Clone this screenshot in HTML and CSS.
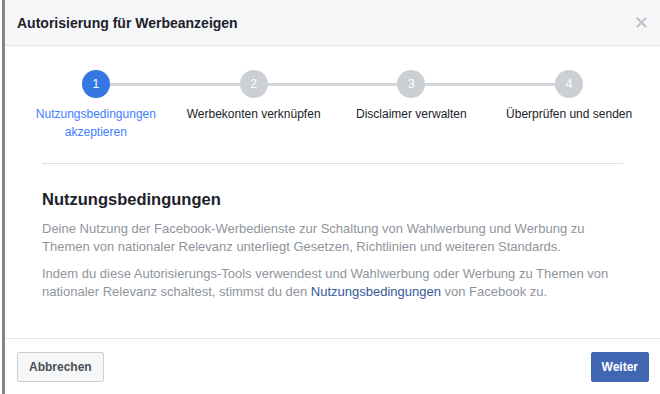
FILE: index.html
```html
<!DOCTYPE html>
<html>
<head>
    <title>Autorisierung für Werbeanzeigen</title>
    <link rel="stylesheet" href="styles.css">
</head>
<body>
    <div class="edge"></div>
    <div class="dialog">
        <header class="dialog-head">
            <h1>Autorisierung für Werbeanzeigen</h1>
            <button class="close-btn" aria-label="Schließen">
                <svg width="11" height="11" viewBox="0 0 11 11">
                    <path d="M1.5 1.5 L9.5 9.5 M9.5 1.5 L1.5 9.5" stroke="#bec2c9" stroke-width="2.2" stroke-linecap="round"/>
                </svg>
            </button>
        </header>

        <div class="dialog-body">
            <ol class="steps">
                <li class="step active">
                    <span class="dot">1</span>
                    <span class="label">Nutzungsbedingungen akzeptieren</span>
                </li>
                <li class="step">
                    <span class="dot">2</span>
                    <span class="label">Werbekonten verknüpfen</span>
                </li>
                <li class="step">
                    <span class="dot">3</span>
                    <span class="label">Disclaimer verwalten</span>
                </li>
                <li class="step">
                    <span class="dot">4</span>
                    <span class="label">Überprüfen und senden</span>
                </li>
            </ol>

            <div class="content">
                <h2>Nutzungsbedingungen</h2>
                <p>Deine Nutzung der Facebook-Werbedienste zur Schaltung von Wahlwerbung und Werbung zu Themen von nationaler Relevanz unterliegt Gesetzen, Richtlinien und weiteren Standards.</p>
                <p>Indem du diese Autorisierungs-Tools verwendest und Wahlwerbung oder Werbung zu Themen von nationaler Relevanz schaltest, stimmst du den <span class="link">Nutzungsbedingungen</span> von Facebook zu.</p>
            </div>
        </div>

        <footer class="dialog-foot">
            <button class="btn">Abbrechen</button>
            <button class="btn primary">Weiter</button>
        </footer>
    </div>
</body>
</html>
```

FILE: styles.css
```css
body {
    margin: 0;
    height: 394px;
    display: flex;
    background: #fff;
    font-family: "Liberation Sans", Arial, sans-serif;
    color: #1d2129;
    overflow: hidden;
}

.edge {
    width: 3px;
    margin-left: 2px;
    background: #858585;
}

.dialog {
    flex: 1;
    display: flex;
    flex-direction: column;
}

.dialog-head {
    height: 45px;
    display: flex;
    align-items: center;
    justify-content: space-between;
    padding: 0 13px 0 12px;
    background: #f6f7f9;
    border-bottom: 1px solid #e5e5e5;
}

.dialog-head h1 {
    margin: 0;
    font-size: 14px;
    font-weight: bold;
    color: #1d2129;
}

.close-btn {
    border: none;
    background: none;
    padding: 0;
    width: 11px;
    height: 11px;
    display: flex;
    cursor: pointer;
}

.dialog-body {
    flex: 1;
    padding: 24px 12px 0;
}

/* stepper */
.steps {
    list-style: none;
    margin: 0;
    padding: 0;
    display: grid;
    grid-template-columns: repeat(4, 1fr);
}

.step {
    position: relative;
    display: flex;
    flex-direction: column;
    align-items: center;
    text-align: center;
}

.step + .step::before {
    content: "";
    position: absolute;
    top: 13px;
    left: -50%;
    right: 50%;
    height: 3px;
    background: #d3d5d9;
}

.dot {
    position: relative;
    z-index: 1;
    width: 28px;
    height: 28px;
    border-radius: 50%;
    background: #ccd0d5;
    color: #fff;
    font-size: 12px;
    line-height: 28px;
}

.label {
    margin-top: 7px;
    font-size: 12px;
    line-height: 18px;
    color: #1d2129;
}

.step:first-child .label {
    width: 130px;
}

.step.active .dot {
    background: #3578e5;
}

.step.active .label {
    color: #4080ff;
}

/* text */
.content {
    margin: 22px 25px 0;
    padding-top: 24px;
    border-top: 1px solid #dddfe2;
}

.content h2 {
    margin: 0 0 10px;
    font-size: 16.5px;
    line-height: 22px;
    font-weight: bold;
    color: #1d2129;
}

.content p {
    margin: 0 0 9px;
    font-size: 13px;
    line-height: 18px;
    color: #90949c;
}

.content .link {
    color: #365899;
}

/* footer */
.dialog-foot {
    height: 55px;
    display: flex;
    align-items: center;
    justify-content: space-between;
    padding: 0 11px 0 12px;
    border-top: 1px solid #e5e5e5;
}

.btn {
    height: 30px;
    padding: 0 11px;
    font-family: inherit;
    font-size: 12px;
    font-weight: bold;
    color: #4b4f56;
    background: #f5f6f7;
    border: 1px solid #ccd0d5;
    border-radius: 2px;
    cursor: pointer;
}

.btn.primary {
    padding: 0 10px;
    color: #fff;
    background: #4267b2;
    border-color: #4267b2;
}
```
